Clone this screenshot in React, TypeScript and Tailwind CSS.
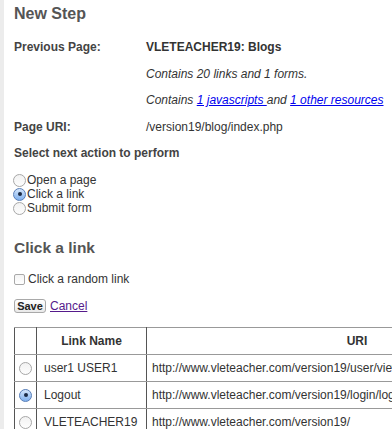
import React from "react";

function Radio({ checked = false }: { checked?: boolean }) {
  if (checked) {
    return (
      <span className="inline-flex h-[13px] w-[13px] shrink-0 items-center justify-center rounded-full border border-[#5a7fb8] bg-[linear-gradient(180deg,#d5e6fb,#7fb0ee)]">
        <span className="h-[4px] w-[4px] rounded-full bg-[#1b2a44]" />
      </span>
    );
  }
  return (
    <span className="inline-block h-[13px] w-[13px] shrink-0 rounded-full border border-[#a7a7a7] bg-[linear-gradient(180deg,#f2f2f2,#fdfdfd)]" />
  );
}

const infoRows = [
  { label: "Previous Page:", value: <span className="font-bold">VLETEACHER19: Blogs</span> },
  { label: "", value: <span className="italic">Contains 20 links and 1 forms.</span> },
  {
    label: "",
    value: (
      <span className="italic">
        Contains <a className="text-[#0000ee] underline">1 javascripts </a>and{" "}
        <a className="text-[#0000ee] underline">1 other resources</a>
      </span>
    ),
  },
  { label: "Page URI:", value: <span>/version19/blog/index.php</span> },
];

const links = [
  { name: "user1 USER1", uri: "http://www.vleteacher.com/version19/user/view.php?id=2&course=1", checked: false },
  { name: "Logout", uri: "http://www.vleteacher.com/version19/login/logout.php?sesskey=x8Fd2", checked: true },
  { name: "VLETEACHER19", uri: "http://www.vleteacher.com/version19/", checked: false },
];

export default function App() {
  return (
    <div className="h-[429px] w-[392px] overflow-hidden border-l-4 border-[#ececec] bg-white pl-[10px] font-['Liberation_Sans',Arial,sans-serif] text-[12px] leading-[14px] text-[#333]">
      <h1 className="pt-[4px] text-[16px] leading-[20px] font-bold text-[#555]">New Step</h1>

      <div className="mt-[10px]">
        {infoRows.map((row, i) => (
          <div key={i} className="flex h-[26.5px] items-center">
            <div className="w-[132px] shrink-0 font-bold text-[#444]">{row.label}</div>
            <div className="whitespace-nowrap">{row.value}</div>
          </div>
        ))}
      </div>

      <p className="mt-[6px] font-bold text-[#444]">Select next action to perform</p>

      <div className="mt-[13px] -ml-px">
        {["Open a page", "Click a link", "Submit form"].map((label) => (
          <label key={label} className="flex h-[14px] items-center gap-px">
            <Radio checked={label === "Click a link"} />
            {label}
          </label>
        ))}
      </div>

      <h2 className="mt-[23px] text-[15.5px] leading-[20px] font-bold text-[#555]">Click a link</h2>

      <label className="mt-[14px] flex h-[14px] items-center gap-[3px]">
        <span className="inline-block h-[11px] w-[11px] rounded-[2px] border border-[#a9a9a9] bg-[linear-gradient(180deg,#f4f4f4,#fff)]" />
        Click a random link
      </label>

      <div className="mt-[13px] flex items-center gap-[4px]">
        <button
          type="button"
          className="flex h-[14px] w-[32px] items-center justify-center rounded-[3px] border border-[#a9a9a9] bg-[linear-gradient(180deg,#ffffff,#e9e9e9)] text-[11px] leading-none font-bold text-[#222]"
        >
          Save
        </button>
        <a className="text-[#551a8b] underline">Cancel</a>
      </div>

      <table className="mt-[14px] w-[554px] table-fixed border-collapse border border-[#555]">
        <colgroup>
          <col className="w-[22px]" />
          <col className="w-[110px]" />
          <col />
        </colgroup>
        <thead>
          <tr className="h-[27px]">
            <th className="border border-x-[#555] border-y-[#999]" />
            <th className="border border-x-[#555] border-y-[#999] text-center font-bold text-[#333]">Link Name</th>
            <th className="border border-x-[#555] border-y-[#999] text-center font-bold text-[#333]">URI</th>
          </tr>
        </thead>
        <tbody>
          {links.map((l) => (
            <tr key={l.name} className="h-[27px]">
              <td className="border border-x-[#555] border-y-[#999]">
                <div className="flex justify-center">
                  <Radio checked={l.checked} />
                </div>
              </td>
              <td className="border border-x-[#555] border-y-[#999] pl-[7px] whitespace-nowrap">{l.name}</td>
              <td className="overflow-hidden border border-x-[#555] border-y-[#999] pl-[5px] whitespace-nowrap">{l.uri}</td>
            </tr>
          ))}
        </tbody>
      </table>
    </div>
  );
}
